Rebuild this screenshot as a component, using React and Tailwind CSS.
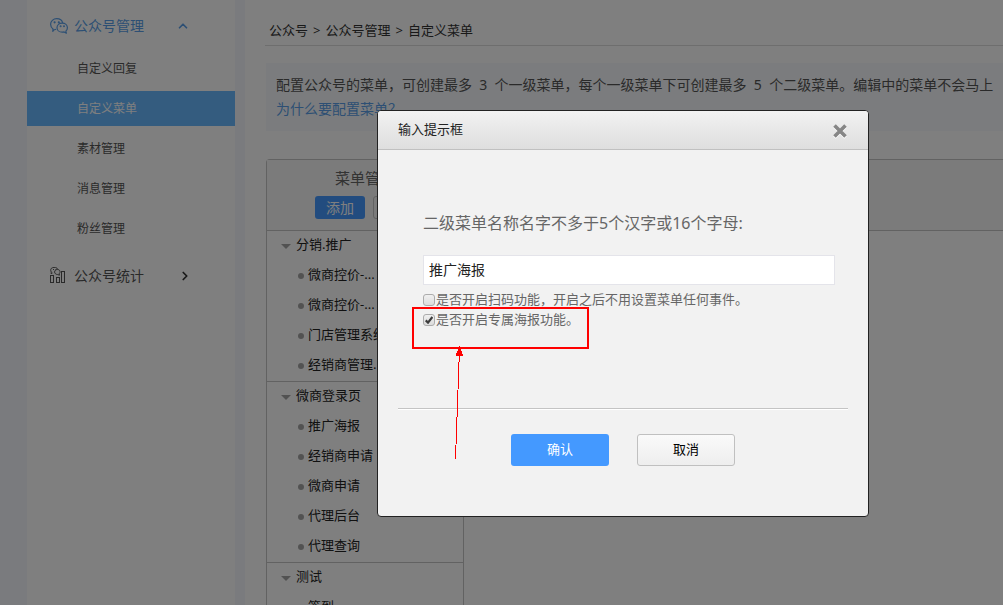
import { useState } from 'react';
import { ChevronRight, ChevronUp } from 'lucide-react';

const subItems = ['自定义回复', '自定义菜单', '素材管理', '消息管理', '粉丝管理'];

const menuGroups = [
  {
    name: '分销.推广',
    children: ['微商控价-...', '微商控价-...', '门店管理系统', '经销商管理...'],
  },
  {
    name: '微商登录页',
    children: ['推广海报', '经销商申请', '微商申请', '代理后台', '代理查询'],
  },
  {
    name: '测试',
    children: ['签到'],
  },
];

function WechatIcon() {
  return (
    <svg width="18" height="16" viewBox="0 0 18 16" fill="none" stroke="currentColor" strokeWidth="1.2">
      <path d="M6 11.2 3.8 12l-1 1.4.2-2.4C1.500 9.900.6 8.200.6 6.300.6 3.200 3.300.7 6.700.7c3 0 5.500 1.900 6 4.500" strokeLinejoin="round" />
      <path d="M12.200 5.200c-3 0-5.200 2-5.200 4.500s2.200 4.500 5.200 4.500c.7 0 1.300-.1 1.900-.3l2.300 1.300-.6-2.100c1-.8 1.600-2 1.600-3.400 0-2.500-2.200-4.500-5.200-4.500z" strokeLinejoin="round" />
      <circle cx="4.600" cy="4.300" r=".5" fill="currentColor" />
      <circle cx="8.800" cy="4.300" r=".5" fill="currentColor" />
      <circle cx="10.600" cy="8.300" r=".4" fill="currentColor" />
      <circle cx="14" cy="8.300" r=".4" fill="currentColor" />
    </svg>
  );
}

function StatsIcon() {
  return (
    <svg width="18" height="18" viewBox="0 0 18 18" fill="none" stroke="currentColor">
      <rect x=".5" y="8.500" width="3" height="7" />
      <rect x="6.500" y="10.500" width="3" height="5" />
      <rect x="11.500" y="4.500" width="3" height="11" />
      <path d="M2.500 6 1 6.600l.3-1.500C.2 3.300.6 1.300 2.300.8 4.500-.2 7 .4 7.900 2.400" />
      <path d="M7.500 2.500C5.700 2.500 4.600 3.700 4.600 5s1.200 2.500 2.900 2.500l2 .7-.4-1.400c1.800-1.500.9-4.300-1.600-4.300z" />
      <path d="M3 2.500h1M5.500 2.500h.8" />
    </svg>
  );
}

function CloseIcon() {
  return (
    <svg width="14" height="15" viewBox="0 0 14 15" fill="none" strokeWidth="3.600">
      <path d="M1.500 2.500l11 11M12.500 2.500l-11 11" stroke="#ffffff" />
      <path d="M1.500 1.500l11 11M12.500 1.500l-11 11" stroke="#868686" />
    </svg>
  );
}

function Sidebar() {
  return (
    <nav className="w-[208px] shrink-0 bg-white text-[#555555]">
      <a href="#manage" className="flex h-[51px] items-center gap-[6px] pl-[23px] pr-[45px] text-sm text-[#5a9fe8]">
        <WechatIcon />
        <span className="flex-1">公众号管理</span>
        <ChevronUp size={14} strokeWidth={3} />
      </a>
      <ul className="flex flex-col gap-[5px] text-xs">
        {subItems.map((item) => (
          <li key={item}>
            <a
              href="#item"
              className={`flex h-[35px] items-center pl-[50px] ${item === '自定义菜单' ? 'bg-[#68b8ff] text-white' : ''}`}
            >
              {item}
            </a>
          </li>
        ))}
      </ul>
      <a href="#stats" className="mt-1 flex h-[51px] items-center gap-[6px] pl-[23px] pr-[43px] text-sm">
        <StatsIcon />
        <span className="flex-1">公众号统计</span>
        <ChevronRight size={14} strokeWidth={3} className="text-[#333333]" />
      </a>
    </nav>
  );
}

function MenuTree() {
  return (
    <div className="w-[197px] shrink-0 border-r border-[#c4c4c4] text-[13px] text-[#222222]">
      {menuGroups.map((group) => (
        <div key={group.name} className="border-b border-[#c4c4c4]">
          <div className="flex h-[30px] items-center gap-[5px] pb-[2px] pl-[14px]">
            <svg width="10" height="5" viewBox="0 0 10 5" fill="#a5a5a5" className="mt-[2px]">
              <path d="M0 0h10L5 5z" />
            </svg>
            {group.name}
          </div>
          <ul>
            {group.children.map((child, i) => (
              <li key={i} className="flex h-[30px] items-center gap-1 whitespace-nowrap pb-[2px] pl-[31px]">
                <span className="mt-[2px] size-[6px] rounded-full bg-[#a5a5a5]" />
                {child}
              </li>
            ))}
          </ul>
        </div>
      ))}
    </div>
  );
}

function Content() {
  return (
    <main className="min-w-0 flex-1 bg-white pl-5">
      <div className="flex h-[46px] items-end gap-[5px] border-b border-[#dddddd] pb-[5px] pl-1 text-[13px] text-[#333333]">
        <a href="#account">公众号</a>
        <span>&gt;</span>
        <a href="#manage">公众号管理</a>
        <span>&gt;</span>
        <span>自定义菜单</span>
      </div>

      <div className="ml-px mt-[17px] overflow-hidden whitespace-nowrap bg-[#f7f9fc] px-[10px] py-[10px] text-sm leading-6 text-[#555555]">
        <p>配置公众号的菜单，可创建最多&nbsp; 3 &nbsp;个一级菜单，每个一级菜单下可创建最多&nbsp; 5 &nbsp;个二级菜单。编辑中的菜单不会马上</p>
        <a href="#why" className="text-[#5a9fe8]">为什么要配置菜单？</a>
      </div>

      <section className="ml-px mt-7 rounded-tl border-l border-t border-[#c4c4c4]">
        <header className="border-b border-[#c4c4c4] bg-[#f7f7f7]">
          <div className="flex h-[70px] w-[196px] flex-col items-center pt-[6px]">
            <h2 className="text-[15px] leading-6 text-[#666666]">菜单管理</h2>
            <div className="mt-[6px] flex gap-2 text-sm">
              <button type="button" className="h-[23px] w-[50px] rounded-[3px] bg-[#4499ff] text-white">添加</button>
              <button type="button" className="h-[23px] w-[42px] rounded-[3px] border border-[#c4c4c4]">排序</button>
            </div>
          </div>
        </header>
        <MenuTree />
      </section>
    </main>
  );
}

function CheckOption({ id, label, defaultChecked }) {
  const [checked, setChecked] = useState(defaultChecked);

  return (
    <div className="flex h-5 items-center gap-px">
      <span className="grid size-3 place-items-center">
        <input
          id={id}
          type="checkbox"
          checked={checked}
          onChange={(e) => setChecked(e.target.checked)}
          className="col-start-1 row-start-1 size-3 appearance-none rounded-[3px] border border-[#acacac] bg-linear-to-b from-[#f0f0f0] to-[#dcdcdc]"
        />
        {checked && (
          <svg className="pointer-events-none col-start-1 row-start-1" width="8" height="8" viewBox="0 0 8 8" fill="none" stroke="#3c3c3c" strokeWidth="2.200">
            <path d="M.7 4.400 3 6.600 7.400 1" />
          </svg>
        )}
      </span>
      <label htmlFor={id}>{label}</label>
    </div>
  );
}

function PromptDialog() {
  const [name, setName] = useState('推广海报');

  return (
    <div role="dialog" aria-labelledby="dialog-title" className="w-[492px] overflow-hidden rounded border border-[#222222] bg-[#f2f2f2]">
      <header className="flex h-[39px] items-center justify-between border-b border-[#c0c0c0] bg-linear-to-b from-[#f2f2f2] to-[#dedede] pl-5 pr-[21px]">
        <h1 id="dialog-title" className="text-[13px] text-[#222222]">输入提示框</h1>
        <button type="button" aria-label="关闭" className="pt-[3px]">
          <CloseIcon />
        </button>
      </header>

      <div className="relative mx-[45px] h-[258px] pt-[61px] text-[13px] text-[#666666]">
        <label htmlFor="menu-name" className="block text-base leading-6">二级菜单名称名字不多于5个汉字或16个字母:</label>
        <input
          id="menu-name"
          type="text"
          value={name}
          onChange={(e) => setName(e.target.value)}
          className="mb-[5px] mt-5 block h-[30px] w-[412px] border border-[#e4e4ea] bg-white px-[5px] pb-[2px] text-sm text-[#222222]"
        />
        <CheckOption id="scan" label="是否开启扫码功能，开启之后不用设置菜单任何事件。" defaultChecked={false} />
        <CheckOption id="poster" label="是否开启专属海报功能。" defaultChecked />

        {/* Highlight frame and pointer */}
        <div className="pointer-events-none absolute left-[-11px] top-[157px] h-[42px] w-[177px] border-2 border-[#ff0000]" />
        <svg className="pointer-events-none absolute left-[30px] top-[196px] z-10" width="14" height="114" viewBox="0 0 14 114" shapeRendering="crispEdges">
          <path d="M6.500 3 2.500 113" stroke="#ff0000" strokeWidth="1" fill="none" />
          <path d="M6.500 0 10.500 10h-8z" fill="#ff0000" />
        </svg>
      </div>

      <footer className="mx-5 flex justify-center gap-7 border-t border-[#c4c4c4] pb-[50px] pt-[25px] text-[13px] shadow-[inset_0_1px_0_#ffffff]">
        <button type="button" className="h-8 w-[98px] rounded-[3px] bg-[#4499ff] text-white">确认</button>
        <button type="button" className="h-8 w-[98px] rounded-[3px] border border-[#c0c0c0] bg-linear-to-b from-[#fafafa] to-[#eeeeee] text-black">取消</button>
      </footer>
    </div>
  );
}

export default function App() {
  return (
    <div className="h-screen overflow-hidden bg-[#f4f7fc] font-['Noto_Sans','Noto_Sans_CJK_SC',sans-serif]">
      <div className="flex min-h-screen gap-[10px] pl-[27px]">
        <Sidebar />
        <Content />
      </div>

      <div className="fixed inset-0 flex items-start justify-center bg-black/50 pl-[243px] pt-[110px]">
        <PromptDialog />
      </div>
    </div>
  );
}
